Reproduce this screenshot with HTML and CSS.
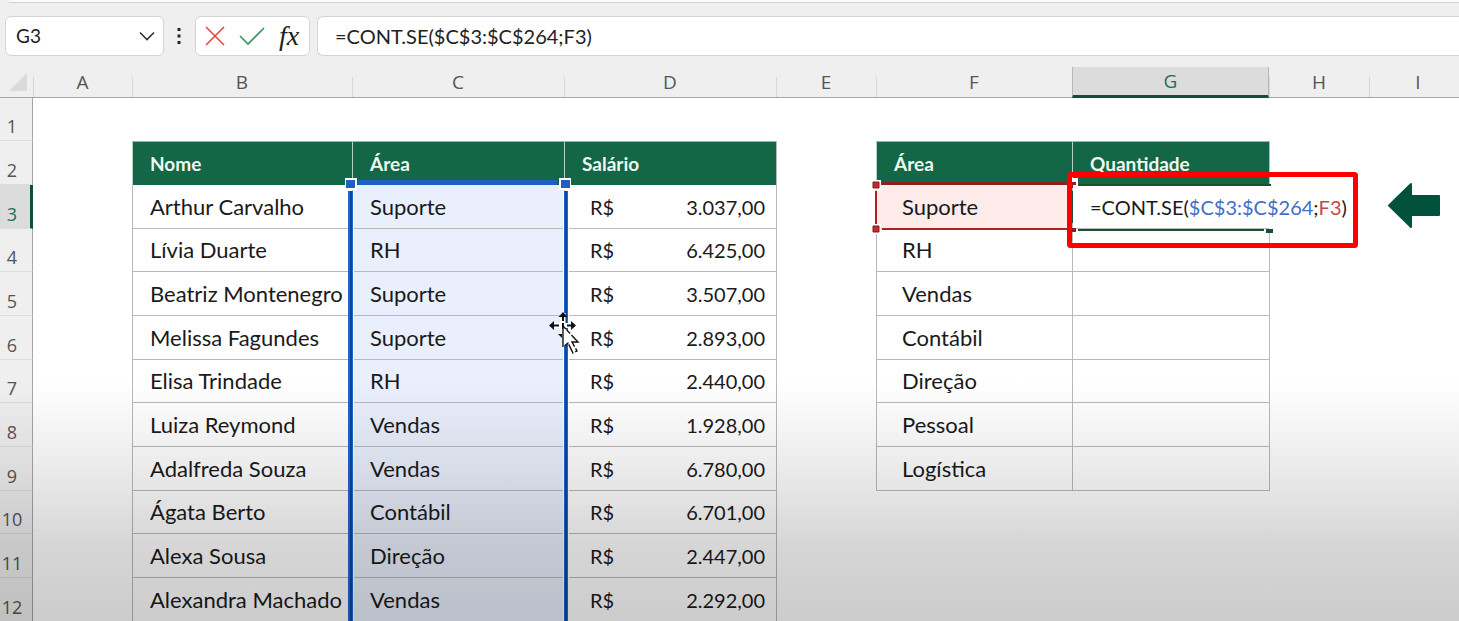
FILE: index.html
```html
<!DOCTYPE html>
<html lang="pt-BR">
<head>
<meta charset="utf-8">
<title>Planilha</title>
<link rel="stylesheet" href="styles.css">
</head>
<body>
<div class="ribbon-edge"></div>
<header class="formula-row">
  <div class="name-box">
    <input class="name-input" type="text" value="G3" aria-label="Caixa de nome">
    <button class="icon-btn" type="button" aria-label="Abrir lista de nomes">
      <svg width="16" height="10" viewBox="0 0 16 10"><path d="M1 1.500 8 8.500 15 1.500" fill="none" stroke="#333" stroke-width="1.600"/></svg>
    </button>
  </div>
  <svg class="dots" width="4" height="18" viewBox="0 0 4 18"><path d="M.5 1h3v3h-3zM.5 7.500h3v3h-3zM.5 14h3v3h-3z" fill="#222"/></svg>
  <div class="actions">
    <button class="icon-btn" type="button" aria-label="Cancelar">
      <svg width="20" height="20" viewBox="0 0 20 20"><path d="M1 1 19 19M19 1 1 19" fill="none" stroke="#e0483c" stroke-width="1.600"/></svg>
    </button>
    <button class="icon-btn" type="button" aria-label="Inserir">
      <svg width="26" height="20" viewBox="0 0 26 20"><path d="M1 10 9 18 25 2" fill="none" stroke="#3a9566" stroke-width="1.700"/></svg>
    </button>
    <button class="icon-btn fx" type="button" aria-label="Inserir função">fx</button>
  </div>
  <input class="formula-input" type="text" value="=CONT.SE($C$3:$C$264;F3)" aria-label="Barra de fórmulas">
</header>
<main class="sheet">
<table class="grid">
  <colgroup><col class="w-row"><col class="w-a"><col class="w-b"><col class="w-c"><col class="w-c"><col class="w-e"><col class="w-f"><col class="w-g"><col class="w-e"><col></colgroup>
  <thead>
    <tr><td class="corner"><svg width="18" height="18" viewBox="0 0 18 18"><path d="M18 0v18H0z" fill="#dadada"/></svg></td><th scope="col">A</th><th scope="col">B</th><th scope="col">C</th><th scope="col">D</th><th scope="col">E</th><th scope="col">F</th><th scope="col" class="current">G</th><th scope="col">H</th><th scope="col" class="last">I</th></tr>
  </thead>
  <tbody>
    <tr><th scope="row">1</th><td></td><td></td><td></td><td></td><td></td><td></td><td></td><td></td><td></td></tr>
    <tr><th scope="row">2</th><td></td><td class="title">Nome</td><td class="title">Área</td><td class="title">Salário</td><td class="edge"></td><td class="title">Área</td><td class="title">Quantidade</td><td class="edge"></td><td></td></tr>
    <tr><th scope="row" class="current">3</th><td></td><td class="cell">Arthur Carvalho</td><td class="cell range">Suporte</td><td class="cell"><div class="money"><span>R$</span><span>3.037,00</span></div></td><td class="edge"></td><td class="cell inset criterion">Suporte</td><td class="cell editing">=CONT.SE(<span class="ref-range">$C$3:$C$264</span>;<span class="ref-cell">F3</span>)</td><td></td><td></td></tr>
    <tr><th scope="row">4</th><td></td><td class="cell">Lívia Duarte</td><td class="cell range">RH</td><td class="cell"><div class="money"><span>R$</span><span>6.425,00</span></div></td><td class="edge"></td><td class="cell inset">RH</td><td class="cell"></td><td class="edge"></td><td></td></tr>
    <tr><th scope="row">5</th><td></td><td class="cell">Beatriz Montenegro</td><td class="cell range">Suporte</td><td class="cell"><div class="money"><span>R$</span><span>3.507,00</span></div></td><td class="edge"></td><td class="cell inset">Vendas</td><td class="cell"></td><td class="edge"></td><td></td></tr>
    <tr><th scope="row">6</th><td></td><td class="cell">Melissa Fagundes</td><td class="cell range">Suporte</td><td class="cell"><div class="money"><span>R$</span><span>2.893,00</span></div></td><td class="edge"></td><td class="cell inset">Contábil</td><td class="cell"></td><td class="edge"></td><td></td></tr>
    <tr><th scope="row">7</th><td></td><td class="cell">Elisa Trindade</td><td class="cell range">RH</td><td class="cell"><div class="money"><span>R$</span><span>2.440,00</span></div></td><td class="edge"></td><td class="cell inset">Direção</td><td class="cell"></td><td class="edge"></td><td></td></tr>
    <tr><th scope="row">8</th><td></td><td class="cell">Luiza Reymond</td><td class="cell range">Vendas</td><td class="cell"><div class="money"><span>R$</span><span>1.928,00</span></div></td><td class="edge"></td><td class="cell inset">Pessoal</td><td class="cell"></td><td class="edge"></td><td></td></tr>
    <tr><th scope="row">9</th><td></td><td class="cell">Adalfreda Souza</td><td class="cell range">Vendas</td><td class="cell"><div class="money"><span>R$</span><span>6.780,00</span></div></td><td class="edge"></td><td class="cell inset">Logística</td><td class="cell"></td><td class="edge"></td><td></td></tr>
    <tr><th scope="row">10</th><td></td><td class="cell">Ágata Berto</td><td class="cell range">Contábil</td><td class="cell"><div class="money"><span>R$</span><span>6.701,00</span></div></td><td class="edge"></td><td></td><td></td><td></td><td></td></tr>
    <tr><th scope="row">11</th><td></td><td class="cell">Alexa Sousa</td><td class="cell range">Direção</td><td class="cell"><div class="money"><span>R$</span><span>2.447,00</span></div></td><td class="edge"></td><td></td><td></td><td></td><td></td></tr>
    <tr><th scope="row">12</th><td></td><td class="cell">Alexandra Machado</td><td class="cell range">Vendas</td><td class="cell"><div class="money"><span>R$</span><span>2.292,00</span></div></td><td class="edge"></td><td></td><td></td><td></td><td></td></tr>
  </tbody>
</table>
<svg class="marks" aria-hidden="true">
  <!-- blue range outline on column C -->
  <path d="M348 124h6v440h-6zM563 124h6v440h-6z" fill="#fff"/>
  <path d="M358 113h199v5H358z" fill="#1f5fc8"/>
  <path d="M348 124h5v440h-5zM564 124h4v440h-4z" fill="#1f66d0"/>
  <path d="M350 124h2v440h-2zM565 124h2v440h-2z" fill="#0f469c"/>
  <path d="M345 111h12v12h-12zM559 111h12v12h-12z" fill="#fff"/>
  <path d="M346 113h9v8h-9zM561 113h9v8h-9z" fill="#1f5fc0"/>
  <!-- red outline on F3 -->
  <path d="M882 115h186v3H882z" fill="#8f1f1c"/>
  <path d="M882 161h186v2H882zM875 124h2v33h-2z" fill="#b3211f"/>
  <path d="M871 113h10v10h-10zM871 157h10v10h-10z" fill="#fff"/>
  <path d="M873 115h6v6h-6zM873 159h6v6h-6z" fill="#b8302c" stroke="#8d1714"/>
  <!-- G3 edit outline -->
  <path d="M1078 117h193v2h-193zM1072 124h1v32h-1zM1078 162h186v2h-186zM1266 162h7v4h-7z" fill="#17512f"/>
  <path d="M1071 111h7v10h-7z" fill="#fff"/>
  <path d="M1070 115h6v3h-6zM1070 118h3v3h-3zM1070 161h6v4h-6z" fill="#8f1f1c"/>
  <!-- highlight frame and arrow -->
  <rect x="1069.500" y="107.500" width="286" height="71" rx="1" fill="none" stroke="#fe0000" stroke-width="5"/>
  <path d="M1389 138.500 1411 117v12h28v19h-28v12z" fill="#02513b" stroke="#02513b" stroke-width="2" stroke-linejoin="round"/>
</svg>
<svg class="pointer" width="32" height="46" viewBox="0 0 32 46" aria-hidden="true">
  <path d="M14 1v24M2 13.500h24" stroke="#fff" stroke-width="5"/>
  <path d="M14 4v5M14 11v6M4 13.500h6M18 13.500h6" stroke="#111" stroke-width="2"/>
  <path d="M14 0 18.500 5h-9zM0 13.500 5 9v9zM27 13.500 22 9v9zM13 26 9 22h4z" fill="#111"/>
  <path d="M14 14v21l5-4 5 10 4-2-5-9h6z" fill="#fff" stroke="#111" stroke-width="1.400" stroke-dasharray="21 2 5 1 10 2 5 2"/>
</svg>
</main>
</body>
</html>
```
FILE: styles.css
```css
* { box-sizing: border-box; }
body {
  margin: 0;
  height: 100vh;
  overflow: hidden;
  display: flex;
  flex-direction: column;
  background: #efefef;
  color: #1a1a1a;
  font-family: Lato, "Open Sans", sans-serif;
  font-size: 20px;
}
.ribbon-edge {
  flex: none;
  height: 3px;
  margin-left: 8px;
  background: #fafafa;
  border-bottom: 1px solid #d2d2d2;
  border-bottom-left-radius: 6px;
}
.formula-row {
  flex: none;
  display: flex;
  align-items: center;
  height: 64px;
  padding: 13px 0 12px 5px;
}
.name-box, .actions, .formula-input {
  height: 40px;
  background: #fff;
  border: 1px solid #d4d4d4;
  border-radius: 6px;
}
.name-box {
  display: flex;
  align-items: center;
  width: 159px;
  padding: 0 8px 0 10px;
}
.name-input {
  flex: 1;
  min-width: 0;
  padding: 0;
  border: 0;
  background: none;
  color: #222;
  font: inherit;
  font-size: 19px;
}
.icon-btn {
  display: flex;
  padding: 0;
  border: 0;
  background: none;
  color: #222;
}
.dots { margin: 0 14px 0 13px; }
.actions {
  display: flex;
  align-items: center;
  gap: 14px;
  width: 115px;
  padding: 0 8px 0 9px;
}
.fx {
  font: italic 28px/28px "Liberation Serif", serif;
}
.formula-input {
  flex: 1;
  min-width: 0;
  margin-left: 7px;
  padding: 0 0 0 17px;
  border-right: 0;
  border-top-right-radius: 0;
  border-bottom-right-radius: 0;
  color: #222;
  font: inherit;
}
.sheet {
  position: relative;
  flex: 1;
  min-height: 0;
  overflow: hidden;
  background: #fff;
}
/* shade fading in over the lower rows */
.sheet::after {
  content: "";
  position: absolute;
  inset: auto 0 0 0;
  height: 240px;
  background: linear-gradient(rgba(0, 0, 0, 0), rgba(0, 0, 0, .08) 36%, rgba(0, 0, 0, .16) 68%, rgba(0, 0, 0, .2));
  pointer-events: none;
}
.grid {
  width: 100%;
  table-layout: fixed;
  border-collapse: separate;
  border-spacing: 0;
}
.w-row { width: 33px; }
.w-a { width: 99px; }
.w-b { width: 220px; }
.w-c { width: 212px; }
.w-e { width: 100px; }
.w-f { width: 196px; }
.w-g { width: 197px; }
.grid td, .grid th { padding: 0; white-space: nowrap; line-height: 24px; }
.grid th {
  background: #efefef;
  color: #555;
  font-family: "Open Sans", sans-serif;
  font-size: 18px;
  font-weight: 400;
}
thead tr { height: 31px; }
.grid thead th, .corner {
  background: #efefef;
  border-bottom: 1px solid #a6a6a6;
  font-size: 19px;
}
.grid thead th {
  background: linear-gradient(#d6d6d6, #d6d6d6) 0 100% / 1px 20px no-repeat #efefef;
}
.grid .last { padding-left: 8px; }
.corner svg { display: block; margin-left: 9px; }
.grid thead .current {
  background: #dcdcdc;
  border-bottom: 3px solid #0d5134;
  border-left: 1px solid #b8b8b8;
  border-right: 1px solid #b8b8b8;
  color: #1f6f57;
}
tbody tr { height: 44px; }
tbody tr:nth-child(3n+1) { height: 43px; }
.grid tbody th {
  padding: 0 8px 2px 0;
  vertical-align: bottom;
  border-right: 1px solid #a6a6a6;
  border-bottom: 1px solid #dcdcdc;
}
.grid tbody .current {
  background: #dcdcdc;
  border-right: 3px solid #0d5134;
  padding-right: 6px;
  color: #1f6f57;
}
.grid .cell {
  padding: 0 0 0 17px;
  border-left: 1px solid #b9b9b9;
  border-bottom: 1px solid #b9b9b9;
  font-size: 22px;
}
.edge { border-left: 1px solid #b9b9b9; }
.grid .title {
  padding: 0 11px 0 17px;
  background: #136646;
  border-left: 1px solid #b5d0c4;
  border-top: 1px solid #9fb5aa;
  color: #eef8ee;
  font-size: 19px;
  font-weight: 700;
}
.grid .inset { padding-left: 25px; }
.range { background: #e9effc; }
.criterion { background: #fdecea; }
.grid .editing { font-size: 20px; }
.money {
  display: flex;
  justify-content: space-between;
  padding: 0 11px 0 8px;
  font-size: 20px;
}
.ref-range { color: #3f6fc6; }
.ref-cell { color: #c24a48; }
.marks {
  position: absolute;
  top: 0;
  left: 0;
  width: 100%;
  height: 100%;
}
.pointer {
  position: absolute;
  top: 245px;
  left: 549px;
}
```
